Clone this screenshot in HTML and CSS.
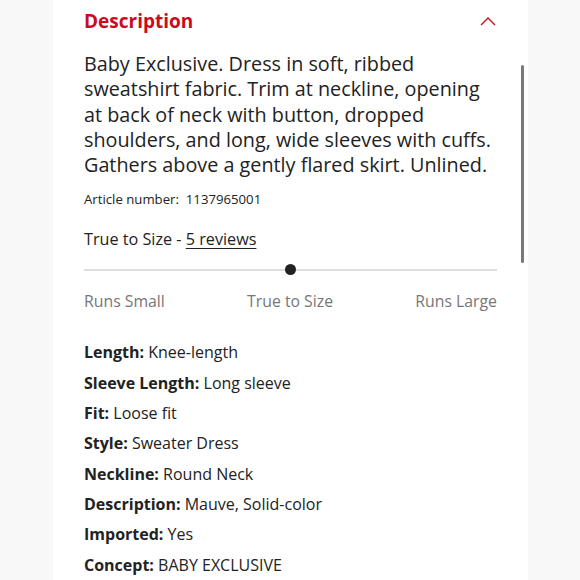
FILE: index.html
```html
<!DOCTYPE html>
<html lang="en">
<head>
    <meta charset="UTF-8">
    <meta name="viewport" content="width=device-width, initial-scale=1.0">
    <title>Description</title>
    <link rel="stylesheet" href="styles.css">
</head>
<body>
    <div class="panel">
        <div class="panel-header">
            <h2>Description</h2>
            <svg class="chevron" width="16" height="10" viewBox="0 0 16 10">
                <polyline points="1,9 8,2 15,9" fill="none" stroke="#cc0a1f" stroke-width="1.4"/>
            </svg>
        </div>

        <p class="desc-text">Baby Exclusive. Dress in soft, ribbed sweatshirt fabric. Trim at neckline, opening at back of neck with button, dropped shoulders, and long, wide sleeves with cuffs. Gathers above a gently flared skirt. Unlined.</p>

        <p class="article">Article number:&nbsp; 1137965001</p>

        <p class="fit-title">True to Size - <a href="#">5 reviews</a></p>

        <div class="fit-scale">
            <div class="fit-line"></div>
            <div class="fit-dot"></div>
        </div>
        <div class="fit-labels">
            <span>Runs Small</span>
            <span>True to Size</span>
            <span>Runs Large</span>
        </div>

        <ul class="specs">
            <li><b>Length:</b> Knee-length</li>
            <li><b>Sleeve Length:</b> Long sleeve</li>
            <li><b>Fit:</b> Loose fit</li>
            <li><b>Style:</b> Sweater Dress</li>
            <li><b>Neckline:</b> Round Neck</li>
            <li><b>Description:</b> Mauve, Solid-color</li>
            <li><b>Imported:</b> Yes</li>
            <li><b>Concept:</b> BABY EXCLUSIVE</li>
        </ul>

        <div class="scrollbar"></div> <!-- scroll thumb -->
    </div>
</body>
</html>
```

FILE: styles.css
```css
body, html {
    margin: 0;
    padding: 0;
    height: 100%;
    font-family: "Open Sans", Lato, sans-serif;
    background-color: #f8f8f8;
    color: #222;
}

.panel {
    position: relative;
    margin-left: 53px;
    width: 475px;
    height: 580px;
    overflow: hidden;
    box-sizing: border-box;
    padding: 0 31px;
    background-color: #fff;
}

.panel-header {
    display: flex;
    justify-content: space-between;
    align-items: center;
    height: 42px;
}

.panel-header h2 {
    margin: 0;
    font-size: 19px;
    font-weight: 700;
    color: #cc0a1f;
}

.chevron {
    margin-right: 1px;
}

.desc-text {
    margin: 9px 0 0;
    font-size: 19.8px;
    line-height: 25.3px;
}

.article {
    margin: 13px 0 0;
    font-size: 13.2px;
    line-height: 18px;
}

.fit-title {
    margin: 21px 0 0;
    font-size: 16.2px;
    line-height: 20px;
}

.fit-title a {
    color: #222;
    text-decoration: underline;
    text-underline-offset: 3px;
}

.fit-scale {
    position: relative;
    display: flex;
    justify-content: center;
    align-items: center;
    height: 11px;
    margin-top: 15px;
}

.fit-line {
    position: absolute;
    left: 0;
    right: 0;
    height: 2px;
    background-color: #ddd;
}

.fit-dot {
    position: relative;
    width: 11px;
    height: 11px;
    border-radius: 50%;
    background-color: #222;
}

.fit-labels {
    display: flex;
    justify-content: space-between;
    margin-top: 16px;
    font-size: 15.8px;
    line-height: 20px;
    color: #777;
}

.specs {
    list-style: none;
    margin: 26px 0 0;
    padding: 0;
    font-size: 16px;
}

.specs li {
    line-height: 30.3px;
}

.specs b {
    font-weight: 700;
}

.scrollbar {
    position: absolute;
    top: 65px;
    left: 468px;
    width: 3px;
    height: 198px;
    border-radius: 2px;
    background-color: #7a7a7a;
}
```
